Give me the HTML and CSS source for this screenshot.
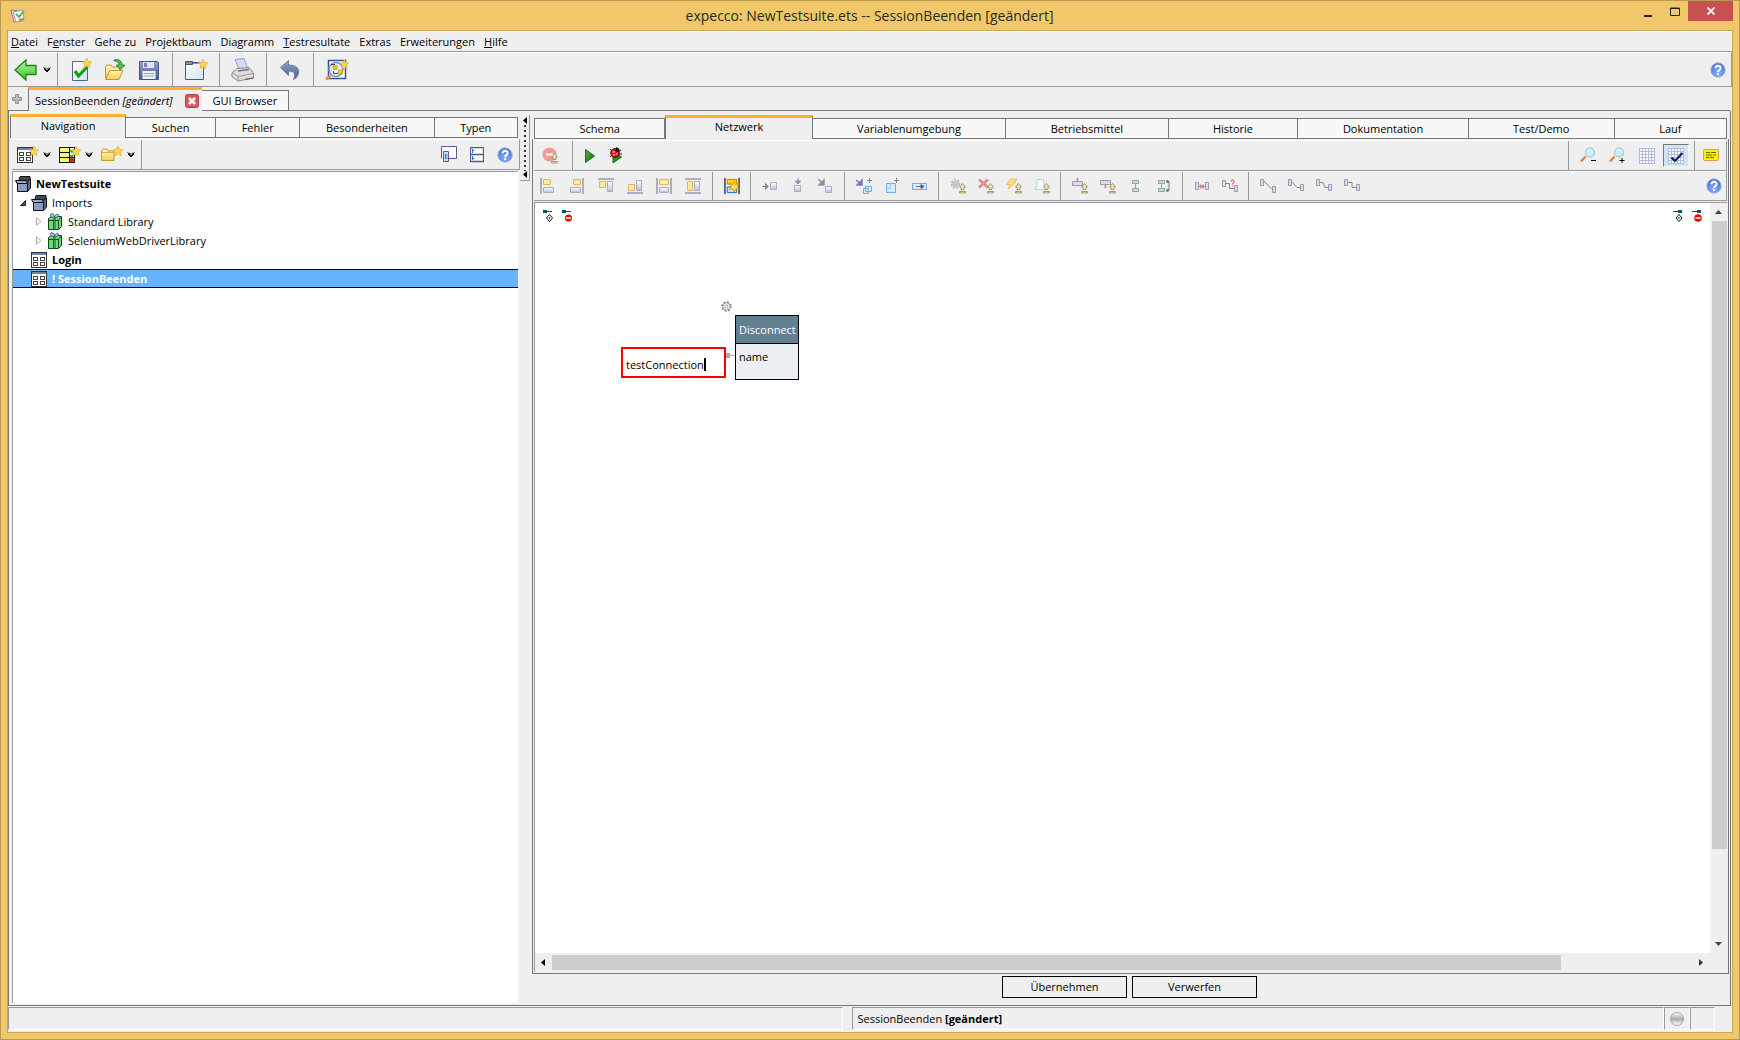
FILE: index.html
```html
<!DOCTYPE html>
<html lang="de">
<head>
<meta charset="utf-8">
<title>expecco: NewTestsuite.ets -- SessionBeenden [geändert]</title>
<link rel="stylesheet" href="styles.css">
</head>
<body>
<svg class="defs" aria-hidden="true">
  <defs>
    <linearGradient id="g-green" x1="0" y1="0" x2="0" y2="1"><stop offset="0" stop-color="#b6f7a0"/><stop offset="1" stop-color="#2fc41f"/></linearGradient>
    <linearGradient id="g-play" x1="0" y1="0" x2="1" y2="1"><stop offset="0" stop-color="#5db82c"/><stop offset="1" stop-color="#14661a"/></linearGradient>
    <linearGradient id="g-yellow" x1="0" y1="0" x2="0" y2="1"><stop offset="0" stop-color="#fff6b8"/><stop offset="1" stop-color="#f7cf55"/></linearGradient>
    <linearGradient id="g-page" x1="0" y1="0" x2="1" y2="1"><stop offset="0" stop-color="#fff"/><stop offset="1" stop-color="#d6e2f4"/></linearGradient>
    <linearGradient id="g-blue" x1="0" y1="0" x2="0" y2="1"><stop offset="0" stop-color="#93a1c6"/><stop offset="1" stop-color="#4c5f96"/></linearGradient>
    <linearGradient id="g-box" x1="0" y1="0" x2="0" y2="1"><stop offset="0" stop-color="#fff"/><stop offset="1" stop-color="#b9bdd8"/></linearGradient>
    <radialGradient id="g-help" cx=".5" cy=".7" r=".7"><stop offset="0" stop-color="#8db4ff"/><stop offset="1" stop-color="#3f6ad6"/></radialGradient>
    <linearGradient id="g-led" x1="0" y1="0" x2="0" y2="1"><stop offset="0" stop-color="#fff"/><stop offset=".5" stop-color="#aaa"/><stop offset="1" stop-color="#fff"/></linearGradient>
  </defs>
  <symbol id="star" viewBox="0 0 10 10"><path d="M5 0.3 6.4 3.4 9.7 3.8 7.4 6.2 8 9.6 5 8 2 9.6 2.6 6.2 .3 3.8 3.6 3.4Z" fill="#ffd84a" stroke="#e0a93a" stroke-width=".7"/></symbol>
  <symbol id="pm" viewBox="0 0 7 11"><path d="M3.500.5 6.500 4H5v2.500H2V4H.5ZM.5 8.500h6v1.500h-6Z" fill="#f7e6a0" stroke="#8f866c" stroke-width=".8"/></symbol>
  <symbol id="chev" viewBox="0 0 8 6"><path d="M.5.5 4 4 7.500.5M2 .5 4 2.500 6 .5M1 2 4 5 7 2" fill="none" stroke="#111"/></symbol>
  <symbol id="help" viewBox="0 0 16 16"><circle cx="8" cy="8" r="7.200" fill="url(#g-help)" stroke="#9fb4e4"/><path d="M5.500 6.200C5.500 3 10.600 3 10.600 6c0 2-2.500 1.900-2.500 4M8.100 11.300v1.700" fill="none" stroke="#fff" stroke-width="1.900"/></symbol>
  <symbol id="app" viewBox="0 0 16 16"><path d="M1 2 10 3 12 13 4 14Z" fill="#e9eef8" stroke="#b46a58"/><path d="M3 4 13 2 14 12 6 14Z" fill="#f4f7fb" stroke="#9aa6b8"/><path d="M6 6 9 9 14 3" fill="none" stroke="#5bb96c" stroke-width="2"/><path d="M9 12 14 11" stroke="#d8764e" stroke-width="2"/></symbol>
  <symbol id="back" viewBox="0 0 24 22"><path d="M1 11 12 1V6.500H22V15.500H12V21Z" fill="url(#g-green)" stroke="#22821d" stroke-width="1.300"/></symbol>
  <symbol id="newcheck" viewBox="0 0 22 24"><path d="M2.500 3.500h15v19h-15z" fill="url(#g-page)" stroke="#53648f"/><path d="M5 13 8.500 18 17 9" fill="none" stroke="#12a012" stroke-width="3.200"/><use href="#star" x="12" y="0" width="10" height="10"/></symbol>
  <symbol id="open" viewBox="0 0 22 24"><path d="M1.500 20.500V8.500l1.500-1.500h4l1.500 2h7v3.500" fill="url(#g-yellow)" stroke="#c8962a"/><path d="M1.500 21.500 6 12.500H19L15 21.500Z" fill="url(#g-yellow)" stroke="#c8962a"/><path d="M10 2C15 .5 18 3 18 7h3l-4.500 5L12 7h3C15 4 13 3 10 3Z" fill="#4fc04a" stroke="#217d26" stroke-width=".8"/></symbol>
  <symbol id="save" viewBox="0 0 20 20"><path d="M.5 1.500h18l1 1v17H.5Z" fill="url(#g-blue)" stroke="#46568b"/><path d="M4 2h11v6H4z" fill="#dfe5f1"/><path d="M5 3h3v4H5z" fill="#7382b0"/><path d="M3.500 11h13v8h-13z" fill="#eef1f8"/><path d="M5 13.500h10M5 16h10" stroke="#9aa3bf"/></symbol>
  <symbol id="newwin" viewBox="0 0 24 22"><path d="M1.500 3.500h18v17h-18z" fill="url(#g-page)" stroke="#46568b"/><path d="M1.500 2.500h7v3h-7z" fill="#8391ba" stroke="#46568b"/><path d="M9 4.500h10" stroke="#8391ba"/><use href="#star" x="14" y="0" width="10" height="10"/></symbol>
  <symbol id="print" viewBox="0 0 24 24"><path d="M4 1.500 13 .5 17 11H8Z" fill="#cfdef6" stroke="#8ca0c8"/><path d="M1 15 6 10.500 18 9.500 22.500 15V20L7 23 1 19Z" fill="#dcdcdc" stroke="#8c8c8c"/><path d="M1.500 15 7 18.500 22 15.500M7 18.500V23" fill="none" stroke="#999"/><path d="M7 13 18 11.500" stroke="#777" stroke-width="1.500"/><path d="M14 21.500 22 20" stroke="#555"/></symbol>
  <symbol id="undo" viewBox="0 0 20 20"><path d="M.5 7.500 8.500.5V5C16 5 19.500 8 18.500 13 18 16 16 18.500 13.500 19.500 16 15 15 11 8.500 11v4.500Z" fill="url(#g-blue)" stroke="#5f6d96" stroke-width=".8"/></symbol>
  <symbol id="search" viewBox="0 0 24 22"><path d="M3.500 1.500h17v18h-17z" fill="#fff" stroke="#3c4f96" stroke-width="1.500"/><circle cx="11" cy="10.500" r="7" fill="#d9f0fa" stroke="#7c96bb" stroke-width="1.500"/><path d="M8.500 12v2.500h5M6 5.500h4" fill="none" stroke="#222" stroke-width=".8"/><path d="M8 6.500h4v4H8zM13.500 11h4v4h-4z" fill="#f8c000" stroke="#cf9a00" stroke-width=".6"/><path d="M5.500 16.500 1 20.500" stroke="#e58b42" stroke-width="3"/><use href="#star" x="15" y="0" width="9" height="10"/></symbol>
  <symbol id="plus" viewBox="0 0 10 10"><path d="M3.500.5h3v3h3v3h-3v3h-3v-3h-3v-3h3Z" fill="#bbb" stroke="#909090"/></symbol>
  <symbol id="closetab" viewBox="0 0 14 14"><rect x=".5" y=".5" width="13" height="13" rx="2" fill="#e0565c" stroke="#b4404a"/><path d="M4 4 10 10M10 4 4 10" stroke="#fff" stroke-width="2.600"/></symbol>
  <symbol id="block" viewBox="0 0 16 16"><g shape-rendering="crispEdges"><path d="M.5.5h15v15H.5z" fill="#fff" stroke="#333"/><path d="M1 1h14v2H1z" fill="#6e81ad"/><path d="M2.500 5.500h4v3h-4zM9.500 5.500h4v3h-4zM2.500 10.500h4v3h-4zM9.500 10.500h4v3h-4z" fill="#fff" stroke="#444"/></g></symbol>
  <symbol id="newblock" viewBox="0 0 22 17"><use href="#block" x="0" y="1" width="16" height="16"/><use href="#star" x="12" y="0" width="10" height="10"/></symbol>
  <symbol id="newlist" viewBox="0 0 22 17"><g shape-rendering="crispEdges"><path d="M.5 1.500h15v15H.5z" fill="#fff27c" stroke="#111"/><path d="M0 6.500h16M0 11.500h16M10.500 1v16" stroke="#111"/><path d="M11 2h4v9h-4z" fill="#fff"/></g><path d="M11 4l2 2 2-3M11 9l2 2 2-3" fill="none" stroke="#20a030" stroke-width="1.500"/><path d="M11.500 12.500l3 3m0-3-3 3" stroke="#e00000" stroke-width="2"/><use href="#star" x="12" y="0" width="10" height="10"/></symbol>
  <symbol id="newfolder" viewBox="0 0 22 17"><path d="M.5 14.500V4.500l1.500-1.500h4l1 2h6v9.500Z" fill="url(#g-yellow)" stroke="#c8962a"/><path d="M1 6.500H13" stroke="#d8ae45"/><use href="#star" x="12" y="0" width="10" height="10"/></symbol>
  <symbol id="floatwin" viewBox="0 0 16 17"><path d="M.5 12.500V.5h15v12H8" fill="#fff" stroke="#555a86"/><path d="M2.500 5.500h5v10h-5z" fill="#c7def5" stroke="#555a86"/><path d="M4.500 8v5M5 9h1.500M5 12h1.500" stroke="#2779c4"/></symbol>
  <symbol id="splitwin" viewBox="0 0 14 16"><path d="M.5.5h13v14H.5zM.5 7.500h13" fill="#fff" stroke="#555a86" stroke-width="1.300"/><path d="M2.500 2v4M2.500 3.500h2M2.500 9v4M2.500 11.500h2" stroke="#2779c4"/></symbol>
  <symbol id="suite" viewBox="0 0 16 16"><path d="M5 .5h10v3l-3 2H3.500Z" fill="#3d4a4d" stroke="#111"/><path d="M12.500 5.500 15.500 3V12l-3 3.500Z" fill="#5d6a8e" stroke="#111"/><path d="M2.500 7.500h10v8h-10z" fill="#8c9cc4" stroke="#111"/><path d="M.5 4.500h11l1 3H2Z" fill="#94a3cc" stroke="#111"/></symbol>
  <symbol id="gift" viewBox="0 0 15 17"><path d="M1 5.500 4 3.500h10v10l-3 3H1Z" fill="#69dc72" stroke="#10441b"/><path d="M1.500 7.500h9.500v8.500M11 7.500 14 4" fill="none" stroke="#10441b"/><path d="M6 5.500v11M7.500 5v11" stroke="#2d5070"/><path d="M7 4.500C2 4.500 2 .8 4.500.8 7 .8 7 4.500 7 4.500 7 .8 12 .5 11 3 10.500 4.500 7 4.500 7 4.500Z" fill="#bcd2e4" stroke="#2d5070"/></symbol>
  <symbol id="opened" viewBox="0 0 6 6"><path d="M5.500.5v5H.5Z" fill="#555" stroke="#222"/></symbol>
  <symbol id="closed" viewBox="0 0 6 9"><path d="M.5.8v7.400L5 4.500Z" fill="#fff" stroke="#aaa"/></symbol>
  <symbol id="nobreak" viewBox="0 0 18 18"><circle cx="7.500" cy="7.500" r="7" fill="#f09a9a"/><path d="M4 7.500h7" stroke="#fff" stroke-width="2.200"/><use href="#pm" x="9" y="6" width="7" height="11"/></symbol>
  <symbol id="play" viewBox="0 0 10 14"><path d="M.5.5 9.500 7 .5 13.500Z" fill="url(#g-play)" stroke="#176b1c"/></symbol>
  <symbol id="debug" viewBox="0 0 14 17"><path d="M4 4.500 12.500 10 4 16Z" fill="url(#g-play)" stroke="#176b1c"/><path d="M1 2 3 4M8 0 7 3M12 3 9 5M13 7H9M1 10 3 8" stroke="#111"/><ellipse cx="6" cy="6" rx="4.300" ry="4.500" fill="#e31616" stroke="#300" stroke-width=".8"/><path d="M3.500 5h2M6.500 7h2M4 8h1.500" stroke="#fff"/><circle cx="8.500" cy="3" r="2" fill="#111"/></symbol>
  <symbol id="mag" viewBox="0 0 16 16"><path d="M5.500 9.500 1 14.500" stroke="#d98a4a" stroke-width="2.600"/><circle cx="10" cy="5.500" r="4.600" fill="#c5effb" stroke="#a9b9cb"/><path d="M8 4Q9.500 2 11.500 3" stroke="#fff" fill="none"/></symbol>
  <symbol id="zoomout" viewBox="0 0 18 17"><use href="#mag" width="16" height="16"/><path d="M11 13.500h5" stroke="#111"/></symbol>
  <symbol id="zoomin" viewBox="0 0 18 17"><use href="#mag" width="16" height="16"/><path d="M10.500 13.500h5M13 11v5" stroke="#111"/></symbol>
  <symbol id="grid" viewBox="0 0 16 16"><path d="M.5.5h15v15H.5zM3.500 0v16M6.500 0v16M9.500 0v16M12.500 0v16M0 3.500h16M0 6.500h16M0 9.500h16M0 12.500h16" fill="#fff" stroke="#b3bbdc" shape-rendering="crispEdges"/></symbol>
  <symbol id="gridcheck" viewBox="0 0 16 16"><use href="#grid" width="16" height="16"/><path d="M3.500 9.500 7 13 14.500 5" fill="none" stroke="#0d1f74" stroke-width="2.200"/></symbol>
  <symbol id="note" viewBox="0 0 16 13"><rect x=".5" y=".5" width="15" height="11" rx="1" fill="#fff200" stroke="#d89a60"/><path d="M3 3.500h4M8 3.500h5M3 6h6M10 6h3M3 8.500h3M7 8.500h4" stroke="#665c00"/></symbol>
  <symbol id="al-left" viewBox="0 0 16 16"><path d="M1 0v16" stroke="#9a96b4" stroke-width="1.500"/><path d="M3.500 1.500h7v5h-7z" fill="#ffeb94" stroke="#dfb274"/><path d="M3.500 9.500h10v5h-10z" fill="url(#g-box)" stroke="#a9adc8"/></symbol>
  <symbol id="al-right" viewBox="0 0 16 16"><path d="M14 0v16" stroke="#9a96b4" stroke-width="1.500"/><path d="M4.500 1.500h7v5h-7z" fill="#ffeb94" stroke="#dfb274"/><path d="M1.500 9.500h10v5h-10z" fill="url(#g-box)" stroke="#a9adc8"/></symbol>
  <symbol id="al-top" viewBox="0 0 16 16"><path d="M0 1h16" stroke="#9a96b4" stroke-width="1.500"/><path d="M1.500 3.500h6v6h-6z" fill="#ffeb94" stroke="#dfb274"/><path d="M9.500 3.500h5v10h-5z" fill="url(#g-box)" stroke="#a9adc8"/></symbol>
  <symbol id="al-bottom" viewBox="0 0 16 16"><path d="M0 15h16" stroke="#9a96b4" stroke-width="1.500"/><path d="M1.500 6.500h6v6h-6z" fill="#ffeb94" stroke="#dfb274"/><path d="M9.500 2.500h5v10h-5z" fill="url(#g-box)" stroke="#a9adc8"/></symbol>
  <symbol id="al-vcol" viewBox="0 0 16 16"><path d="M1 0v16M15 0v16" stroke="#9a96b4" stroke-width="1.500"/><path d="M3.500 1.500h9v5h-9z" fill="#ffeb94" stroke="#dfb274"/><path d="M3.500 9.500h9v5h-9z" fill="url(#g-box)" stroke="#a9adc8"/></symbol>
  <symbol id="al-hrow" viewBox="0 0 16 16"><path d="M0 1h16M0 15h16" stroke="#9a96b4" stroke-width="1.500"/><path d="M2.500 3.500h5v9h-5z" fill="#ffeb94" stroke="#dfb274"/><path d="M9.500 3.500h5v9h-5z" fill="url(#g-box)" stroke="#a9adc8"/></symbol>
  <symbol id="layout" viewBox="0 0 17 17"><path d="M1 0v17M16 0v17" stroke="#33304a" stroke-width="1.500"/><path d="M3.500 1.500h10v5h-10z" fill="#ffd900" stroke="#c77a00"/><path d="M3.500 9.500h10v6h-10z" fill="#bfe0ff" stroke="#0d6bd0"/><path d="M11 3 12 7 16 6 13.500 9 16 12 12 11.500 11 15 9.500 11.500 6 12 8 9 6 6 9.500 7Z" fill="#ffe84a" stroke="#e08a00" stroke-width=".8"/></symbol>
  <symbol id="mv-right" viewBox="0 0 16 16"><path d="M0 8.500h6M3.500 5.500v6l3-3Z" fill="#8d8da8" stroke="#8d8da8"/><path d="M8.500 4.500h6v7h-6z" fill="url(#g-box)" stroke="#a9adc8"/></symbol>
  <symbol id="mv-down" viewBox="0 0 16 16"><path d="M8 0v5M5.500 3h5L8 6Z" fill="#8d8da8" stroke="#8d8da8"/><path d="M4.500 7.500h6v6h-6z" fill="url(#g-box)" stroke="#a9adc8"/></symbol>
  <symbol id="mv-diag" viewBox="0 0 16 16"><path d="M0 1 5 6M6 2v5H1Z" fill="#8d8da8" stroke="#8d8da8" stroke-width="1.500"/><path d="M7.500 8.500h6v6h-6z" fill="url(#g-box)" stroke="#a9adc8"/></symbol>
  <symbol id="add-diag" viewBox="0 0 16 16"><path d="M0 2 5 6M6 2v5H1Z" fill="#7d78bd" stroke="#7d78bd" stroke-width="1.500"/><path d="M9.500 8.500h6v5h-6zM7.500 10.500h5v5h-5z" fill="#d8ecff" stroke="#72ace0"/><path d="M13.500 0v5M11 2.500h5" stroke="#888"/></symbol>
  <symbol id="add-box" viewBox="0 0 16 16"><path d="M2.500 5.500h9v9h-9z" fill="#d4ebff" stroke="#72ace0"/><path d="M2.500 10.500h4V5.500" fill="none" stroke="#9cc6ec"/><path d="M12.500 0v5M10 2.500h5" stroke="#888"/></symbol>
  <symbol id="flow" viewBox="0 0 16 16"><path d="M.5 5.500h14v6H.5z" fill="#d4ebff" stroke="#72ace0"/><path d="M4 8.500h6M9 6.500v4l3-2Z" fill="#555" stroke="#555" stroke-width=".8"/></symbol>
  <symbol id="gearpm" viewBox="0 0 16 16"><circle cx="5.500" cy="6" r="3.600" fill="#e4e4e4" stroke="#bdbdbd" stroke-width="2.400" stroke-dasharray="2 1"/><circle cx="5.500" cy="6" r="1.500" fill="#eee" stroke="#aaa"/><use href="#pm" x="9" y="5" width="7" height="11"/></symbol>
  <symbol id="xpm" viewBox="0 0 16 16"><path d="M1 1.500 10 9.500M10 1.500 1 9.500" stroke="#dc9191" stroke-width="3"/><use href="#pm" x="9" y="5" width="7" height="11"/></symbol>
  <symbol id="boltpm" viewBox="0 0 16 16"><path d="M4 1h7L8 4h2L2 11 4 6.500H1Z" fill="#ffe070" stroke="#dcb964" stroke-width=".8"/><use href="#pm" x="9" y="5" width="7" height="11"/></symbol>
  <symbol id="bellpm" viewBox="0 0 16 16"><path d="M3.500 1.500h6l1 8h2v2h-11v-2h1Z" fill="#f6fbff" stroke="#b7cfe6"/><use href="#pm" x="9" y="5" width="7" height="11"/></symbol>
  <symbol id="inpm" viewBox="0 0 16 16"><path d="M5.500 0v3" stroke="#d87878" stroke-width="1.600"/><path d="M.5 3.500h10v4H.5z" fill="#dadcec" stroke="#9a9ab4"/><use href="#pm" x="9" y="5" width="7" height="11"/></symbol>
  <symbol id="outpm" viewBox="0 0 16 16"><path d="M5.500 7v3" stroke="#d87878" stroke-width="1.600"/><path d="M.5 2.500h10v4H.5z" fill="#dadcec" stroke="#9a9ab4"/><use href="#pm" x="9" y="5" width="7" height="11"/></symbol>
  <symbol id="link-v" viewBox="0 0 16 16"><path d="M7.500 5v6" stroke="#e08585"/><path d="M4.500 2.500h6v3h-6zM4.500 10.500h6v3h-6z" fill="#c4dcdc" stroke="#8fa6a8"/></symbol>
  <symbol id="link-turn" viewBox="0 0 16 16"><path d="M5.500 5v6" stroke="#e08585"/><path d="M2.500 2.500h6v3h-6zM2.500 10.500h6v3h-6z" fill="#c4dcdc" stroke="#8fa6a8"/><path d="M10 3.500h3v9h-3M12 2v3L10 3.500ZM12 11v3l-2-1.500Z" fill="none" stroke="#777"/></symbol>
  <symbol id="cut" viewBox="0 0 16 16"><path d="M1.500 4.500h3v7h-3zM11.500 4.500h3v7h-3z" fill="#dadcec" stroke="#9a9ab4"/><path d="M5 8.500h6" stroke="#888"/><path d="M6 6.500l4 4m0-4-4 4" stroke="#e08080" stroke-width="1.300"/></symbol>
  <symbol id="ask" viewBox="0 0 16 16"><path d="M.5 2.500h3v6h-3zM12.500 7.500h3v6h-3z" fill="#dadcec" stroke="#9a9ab4"/><path d="M4 5.500h3.500v5H12" fill="none" stroke="#888"/><path d="M9 3.500C9 1.500 12 1.500 12 3.500 12 5 10.500 5 10.500 6.500M10.500 7.500v1" fill="none" stroke="#e08080" stroke-width="1.300"/></symbol>
  <symbol id="ln-diag" viewBox="0 0 16 16"><path d="M.5 1.500h3v6h-3zM12.500 8.500h3v6h-3z" fill="#dadcec" stroke="#9a9ab4"/><path d="M4 3 12 11.500" stroke="#888"/></symbol>
  <symbol id="ln-half" viewBox="0 0 16 16"><path d="M.5 1.500h3v6h-3zM12.500 6.500h3v6h-3z" fill="#dadcec" stroke="#9a9ab4"/><path d="M4 4 9 9.500h3" fill="none" stroke="#888"/></symbol>
  <symbol id="ln-curve" viewBox="0 0 16 16"><path d="M.5 1.500h3v6h-3zM12.500 6.500h3v6h-3z" fill="#dadcec" stroke="#9a9ab4"/><path d="M4 4.500h2Q8 4.500 8 7T10 9.500h2" fill="none" stroke="#888"/></symbol>
  <symbol id="ln-step" viewBox="0 0 16 16"><path d="M.5 1.500h3v6h-3zM12.500 6.500h3v6h-3z" fill="#dadcec" stroke="#9a9ab4"/><path d="M4 4.500h4v5h4" fill="none" stroke="#888"/></symbol>
  <symbol id="pin-add" viewBox="0 0 11 12"><path d="M1 0h4v3H1z" fill="#00595c"/><path d="M5 1.500h5" stroke="#00595c"/><path d="M7.500 4.500 10.500 8 7.500 11.500 4.500 8Z" fill="#fff" stroke="#111"/><path d="M7.500 7v2M6.500 8h2" stroke="#111" stroke-width=".6"/></symbol>
  <symbol id="pin-del" viewBox="0 0 11 12"><path d="M1 0h4v3H1z" fill="#00595c"/><path d="M5 1.500h5" stroke="#00595c"/><circle cx="7.500" cy="8" r="3.500" fill="#f00"/><path d="M5 8h5" stroke="#fff" stroke-width="1.500"/></symbol>
  <symbol id="pinr-add" viewBox="0 0 11 12"><path d="M6 0h4v3H6z" fill="#00595c"/><path d="M1 1.500h5" stroke="#00595c"/><path d="M7 4.500 10 8 7 11.500 4 8Z" fill="#fff" stroke="#111"/><path d="M7 7v2M6 8h2" stroke="#111" stroke-width=".6"/></symbol>
  <symbol id="pinr-del" viewBox="0 0 11 12"><path d="M6 0h4v3H6z" fill="#00595c"/><path d="M1 1.500h5" stroke="#00595c"/><circle cx="7" cy="8" r="3.800" fill="#f00"/><path d="M4.500 8h5" stroke="#fff" stroke-width="1.500"/></symbol>
  <symbol id="gear" viewBox="0 0 11 11"><circle cx="5.500" cy="5.500" r="4.500" fill="none" stroke="#777" stroke-width="1.400" stroke-dasharray="1.800 1.734"/><circle cx="5.500" cy="5.500" r="3.700" fill="#f4f4f4" stroke="#888" stroke-width=".8"/><circle cx="5.500" cy="5.500" r="1.500" fill="#fff" stroke="#888" stroke-width=".8"/></symbol>
  <symbol id="a-left" viewBox="0 0 4 7"><path d="M4 0v7L0 3.500Z" fill="#000"/></symbol>
  <symbol id="a-up" viewBox="0 0 7 4"><path d="M0 4h7L3.500 0Z" fill="#444"/></symbol>
  <symbol id="a-down" viewBox="0 0 7 4"><path d="M0 0h7L3.500 4Z" fill="#444"/></symbol>
  <symbol id="a-right" viewBox="0 0 4 7"><path d="M0 0v7L4 3.500Z" fill="#333"/></symbol>
  <symbol id="led" viewBox="0 0 14 14"><circle cx="7" cy="7" r="6.500" fill="url(#g-led)" stroke="#a8a8a8"/></symbol>
</svg>

<div class="window">
  <header class="titlebar">
    <svg class="appicon" width="16" height="16"><use href="#app"/></svg>
    <h1>expecco: NewTestsuite.ets -- SessionBeenden [geändert]</h1>
    <div class="winbtns">
      <button class="min" aria-label="Minimieren"><svg width="8" height="14"><path d="M0 12h8" stroke="#222" stroke-width="2"/></svg></button>
      <button class="max" aria-label="Maximieren"><svg width="10" height="9"><path d="M.5 1h9v7.500h-9zM0 1.500h10" fill="none" stroke="#222"/></svg></button>
      <button class="close" aria-label="Schließen"><svg width="8" height="8"><path d="M.5.5l7 7m0-7-7 7" stroke="#fff" stroke-width="1.800"/></svg></button>
    </div>
  </header>

  <div class="client">
    <nav class="menubar">
      <a href="#"><u>D</u>atei</a><a href="#">F<u>e</u>nster</a><a href="#">Gehe zu</a><a href="#">Projektbaum</a><a href="#">Diagramm</a><a href="#"><u>T</u>estresultate</a><a href="#">Extras</a><a href="#">Erweiterungen</a><a href="#"><u>H</u>ilfe</a>
    </nav>

    <div class="toolbar main-tools">
      <div class="group"><button class="back" aria-label="Zurück"><svg width="24" height="22"><use href="#back"/></svg><svg width="8" height="6"><use href="#chev"/></svg></button></div>
      <div class="group"><button aria-label="Neu"><svg width="22" height="24"><use href="#newcheck"/></svg></button><button aria-label="Öffnen"><svg width="22" height="24"><use href="#open"/></svg></button><button aria-label="Speichern"><svg width="20" height="20"><use href="#save"/></svg></button></div>
      <div class="group"><button aria-label="Neues Fenster"><svg width="24" height="22"><use href="#newwin"/></svg></button></div>
      <div class="group"><button aria-label="Drucken"><svg width="24" height="24"><use href="#print"/></svg></button></div>
      <div class="group"><button aria-label="Rückgängig"><svg width="20" height="20"><use href="#undo"/></svg></button></div>
      <div class="group last"><button aria-label="Suchen"><svg width="24" height="22"><use href="#search"/></svg></button></div>
      <button class="help" aria-label="Hilfe"><svg width="16" height="16"><use href="#help"/></svg></button>
    </div>

    <div class="doctabs">
      <button class="addtab" aria-label="Neuer Tab"><svg width="10" height="10"><use href="#plus"/></svg></button>
      <div class="doctab active"><button>SessionBeenden&nbsp;<i>[geändert]</i></button><button class="closetab" aria-label="Tab schließen"><svg width="14" height="14"><use href="#closetab"/></svg></button></div>
      <button class="doctab">GUI Browser</button>
      <div class="rest"></div>
    </div>

    <main class="workspace">
      <section class="left">
        <div class="tabs">
          <button class="tab active">Navigation</button><button class="tab">Suchen</button><button class="tab">Fehler</button><button class="tab">Besonderheiten</button><button class="tab">Typen</button>
        </div>
        <div class="toolbar nav-tools">
          <div class="group">
            <button aria-label="Neuer Baustein"><svg width="22" height="17"><use href="#newblock"/></svg><svg width="8" height="6"><use href="#chev"/></svg></button>
            <button aria-label="Neuer Testplan"><svg width="22" height="17"><use href="#newlist"/></svg><svg width="8" height="6"><use href="#chev"/></svg></button>
            <button aria-label="Neuer Ordner"><svg width="22" height="17"><use href="#newfolder"/></svg><svg width="8" height="6"><use href="#chev"/></svg></button>
          </div>
          <div class="group end">
            <button aria-label="Ansicht"><svg width="16" height="17"><use href="#floatwin"/></svg></button>
            <button aria-label="Teilen"><svg width="14" height="16"><use href="#splitwin"/></svg></button>
            <button aria-label="Hilfe"><svg width="16" height="16"><use href="#help"/></svg></button>
          </div>
        </div>
        <ul class="tree">
          <li class="root"><svg width="16" height="16"><use href="#suite"/></svg><b>NewTestsuite</b></li>
          <li class="l1"><span class="exp"><svg width="6" height="6"><use href="#opened"/></svg></span><svg width="16" height="16"><use href="#suite"/></svg><span>Imports</span></li>
          <li class="l2"><span class="exp"><svg width="6" height="9"><use href="#closed"/></svg></span><svg width="16" height="17"><use href="#gift"/></svg><span>Standard Library</span></li>
          <li class="l2"><span class="exp"><svg width="6" height="9"><use href="#closed"/></svg></span><svg width="16" height="17"><use href="#gift"/></svg><span>SeleniumWebDriverLibrary</span></li>
          <li class="l1"><span class="exp"></span><svg width="16" height="16"><use href="#block"/></svg><b>Login</b></li>
          <li class="l1 selected"><span class="exp"></span><svg width="16" height="16"><use href="#block"/></svg><b>! SessionBeenden</b></li>
        </ul>
      </section>

      <div class="splitter"><div class="grip"><svg width="4" height="7"><use href="#a-left"/></svg><span class="dots"></span><svg width="4" height="7"><use href="#a-left"/></svg></div></div>

      <section class="right">
        <div class="tabs">
          <button class="tab">Schema</button><button class="tab active">Netzwerk</button><button class="tab">Variablenumgebung</button><button class="tab">Betriebsmittel</button><button class="tab">Historie</button><button class="tab">Dokumentation</button><button class="tab">Test/Demo</button><button class="tab">Lauf</button>
        </div>
        <div class="editor">
          <div class="toolbar run-tools">
            <div class="group"><button aria-label="Haltepunkt"><svg width="18" height="18"><use href="#nobreak"/></svg></button></div>
            <div class="group last"><button aria-label="Start"><svg width="10" height="14"><use href="#play"/></svg></button><button aria-label="Debug"><svg width="14" height="17"><use href="#debug"/></svg></button></div>
            <div class="group zoom"><button aria-label="Verkleinern"><svg width="18" height="17"><use href="#zoomout"/></svg></button><button aria-label="Vergrößern"><svg width="18" height="17"><use href="#zoomin"/></svg></button><button aria-label="Raster"><svg width="16" height="16"><use href="#grid"/></svg></button><button class="pressed" aria-label="Am Raster ausrichten"><svg width="16" height="16"><use href="#gridcheck"/></svg></button></div>
            <div class="group last notes"><button aria-label="Notiz"><svg width="16" height="13"><use href="#note"/></svg></button></div>
          </div>
          <div class="toolbar edit-tools">
            <div class="group first"><button aria-label="Links"><svg><use href="#al-left"/></svg></button><button aria-label="Rechts"><svg><use href="#al-right"/></svg></button><button aria-label="Oben"><svg><use href="#al-top"/></svg></button><button aria-label="Unten"><svg><use href="#al-bottom"/></svg></button><button aria-label="Vertikal"><svg><use href="#al-vcol"/></svg></button><button aria-label="Horizontal"><svg><use href="#al-hrow"/></svg></button></div>
            <div class="group"><button aria-label="Layout"><svg><use href="#layout"/></svg></button></div>
            <div class="group"><button aria-label="Nach rechts"><svg><use href="#mv-right"/></svg></button><button aria-label="Nach unten"><svg><use href="#mv-down"/></svg></button><button aria-label="Diagonal"><svg><use href="#mv-diag"/></svg></button></div>
            <div class="group"><button aria-label="Schritt einfügen"><svg><use href="#add-diag"/></svg></button><button aria-label="Neuer Schritt"><svg><use href="#add-box"/></svg></button><button aria-label="Ablauf"><svg><use href="#flow"/></svg></button></div>
            <div class="group"><button aria-label="Aktivität"><svg><use href="#gearpm"/></svg></button><button aria-label="Abbruch"><svg><use href="#xpm"/></svg></button><button aria-label="Ausnahme"><svg><use href="#boltpm"/></svg></button><button aria-label="Signal"><svg><use href="#bellpm"/></svg></button></div>
            <div class="group"><button aria-label="Eingang"><svg><use href="#inpm"/></svg></button><button aria-label="Ausgang"><svg><use href="#outpm"/></svg></button><button aria-label="Verbinden"><svg><use href="#link-v"/></svg></button><button aria-label="Umkehren"><svg><use href="#link-turn"/></svg></button></div>
            <div class="group"><button aria-label="Trennen"><svg><use href="#cut"/></svg></button><button aria-label="Prüfen"><svg><use href="#ask"/></svg></button></div>
            <div class="group last"><button aria-label="Direkt"><svg><use href="#ln-diag"/></svg></button><button aria-label="Geknickt"><svg><use href="#ln-half"/></svg></button><button aria-label="Rund"><svg><use href="#ln-curve"/></svg></button><button aria-label="Rechtwinklig"><svg><use href="#ln-step"/></svg></button></div>
            <button class="help" aria-label="Hilfe"><svg><use href="#help"/></svg></button>
          </div>
          <div class="scroller">
            <div class="canvas">
              <div class="pins"><svg width="11" height="12"><use href="#pin-add"/></svg><svg width="11" height="12"><use href="#pin-del"/></svg></div>
              <div class="pins"><svg width="11" height="12"><use href="#pinr-add"/></svg><svg width="11" height="12"><use href="#pinr-del"/></svg></div>
              <svg class="gear" width="11" height="11"><use href="#gear"/></svg>
              <div class="node"><div class="node-head">Disconnect</div><label class="node-pin" for="pin-name">name</label></div>
              <div class="wire"></div>
              <div class="pinedit"><input id="pin-name" type="text" value="testConnection"><span class="caret"></span></div>
            </div>
            <div class="vbar"><svg width="7" height="4"><use href="#a-up"/></svg><div class="track"><div class="thumb"></div></div><svg width="7" height="4"><use href="#a-down"/></svg></div>
            <div class="hbar"><svg width="4" height="7"><use href="#a-left"/></svg><div class="track"><div class="thumb"></div></div><svg width="4" height="7"><use href="#a-right"/></svg></div>
          </div>
        </div>
        <div class="actions"><button>Übernehmen</button><button>Verwerfen</button></div>
      </section>
    </main>

    <footer class="status">
      <div class="field message"></div>
      <div class="field current">SessionBeenden&nbsp;<b>[geändert]</b></div>
      <div class="field lamp"><svg width="14" height="14"><use href="#led"/></svg></div>
      <div class="field spare"></div>
    </footer>
  </div>
</div>
</body>
</html>
```
FILE: styles.css
```css
* { box-sizing: border-box; }
body { margin: 0; font: 11px/14px "Open Sans", "Noto Sans", sans-serif; color: #000; }
button { font: inherit; color: inherit; background: none; border: 0; padding: 0; margin: 0; display: flex; align-items: center; justify-content: center; white-space: nowrap; }
svg { display: block; flex: none; }
.defs { position: absolute; width: 0; height: 0; }

.window { height: 100vh; display: flex; flex-direction: column; background: #f0c869; border: 1px solid #b8994f; padding: 0 6px 6px; }

.titlebar { display: flex; align-items: center; height: 29px; flex: none; position: relative; }
.titlebar h1 { flex: 1; margin: 0; padding-right: 20px; font-size: 14px; line-height: 20px; font-weight: 400; text-align: center; color: #2a2a1c; }
.appicon { margin-left: 3px; }
.winbtns { position: absolute; right: 0; top: 0; display: flex; height: 20px; }
.winbtns button { width: 27px; }
.winbtns .close { width: 45px; background: #c75050; }

.client { flex: 1; min-height: 0; display: flex; flex-direction: column; background: #efefef; border: 1px solid #c9a656; }

.menubar { height: 21px; flex: none; display: flex; align-items: center; gap: 9px; padding-left: 3px; border-top: 1px solid #fff; border-bottom: 1px solid #999; }
.menubar a { color: inherit; text-decoration: none; }

.toolbar { display: flex; flex: none; border-top: 1px solid #fff; border-bottom: 1px solid #999; border-right: 1px solid #999; }
.group { display: flex; align-items: center; border-right: 1px solid #999; }
.group.last { border-right: 0; }
.help { margin-left: auto; }

.main-tools { height: 35px; }
.main-tools .group { padding: 0 6px; }
.main-tools .group button { width: 34px; height: 32px; }
.main-tools .group .back { width: 37px; gap: 5px; }
.main-tools .help { width: 27px; }

.doctabs { height: 24px; flex: none; display: flex; align-items: flex-end; padding: 0 2px 0 0; }
.addtab { width: 20px; height: 24px; padding-right: 2px; border-bottom: 1px solid #777; }
.doctab { height: 21px; padding: 0 11px; background: #f8f8f8; border: 1px solid #777; border-left: 0; }
.doctab.active { display: flex; align-items: center; gap: 12px; height: 24px; padding: 0 3px 0 6px; background: #efefef; border: 0; border-top: 3px solid #ffb02e; border-left: 1px solid #777; }
.rest { flex: 1; align-self: stretch; border-bottom: 1px solid #777; }

.workspace { flex: 1; min-height: 0; display: grid; grid-template-columns: 510px 12px 1fr; margin-right: 1px; padding: 2px 1px 2px; border: 1px solid #777; border-top: 0; }
.left, .right { display: flex; flex-direction: column; min-width: 0; min-height: 0; }
.left { padding-top: 1px; }
.right { padding-top: 2px; }

.tabs { display: flex; align-items: flex-end; flex: none; height: 24px; }
.tab { flex: 1 1 auto; height: 21px; background: #f8f8f8; border: 1px solid #777; border-left-width: 0; }
.tab:first-child { border-left-width: 1px; }
.tab.active { height: 24px; padding: 0 4px 4px; background: #efefef; border: 0; border-top: 3px solid #ffb02e; border-left: 1px solid #777; border-right: 1px solid #777; }

.left .tabs { margin-right: 2px; }
.nav-tools { height: 31px; margin: 1px 0 0 2px; }
.nav-tools .group { padding: 0 6px 0 5px; gap: 8px; }
.nav-tools .group button { gap: 4px; }
.nav-tools .end { margin-left: auto; border: 0; padding: 0 6px 0 5px; gap: 13px; }

.tree { list-style: none; flex: 1; margin: 1px 2px 0 2px; padding: 2px 0; background: #fff; border-top: 1px solid #999; border-left: 1px solid #999; }
.tree li { display: flex; align-items: center; gap: 5px; height: 19px; padding-left: 2px; }
.tree .l1 { padding-left: 6px; }
.tree .l2 { padding-left: 22px; }
.exp { width: 7px; display: flex; justify-content: flex-end; }
.tree b { font-weight: 700; }
.tree .selected { background: #66b3ff; color: #fff; border-top: 1px solid #000; border-bottom: 1px solid #000; }

.grip { height: 66px; margin: 2px 2px 0 0; padding: 2px 0; display: flex; flex-direction: column; align-items: center; justify-content: space-between; border-right: 1px solid #999; border-bottom: 1px solid #999; }
.dots { width: 2px; height: 46px; background: repeating-linear-gradient(#333 0 2px, transparent 2px 5px); }

.right .tabs { margin: 0 2px 0 2px; }
.editor { flex: 1; min-height: 0; display: flex; flex-direction: column; border: 1px solid #777; border-top: 0; padding: 1px 1px 1px; }
.run-tools { height: 31px; }
.run-tools .group { padding: 0 8px 0 4px; }
.run-tools .group button { width: 26px; height: 23px; }
.run-tools .group.zoom { margin-left: auto; border-left: 1px solid #999; padding: 0 5px 0 7px; gap: 3px; }
.run-tools .group.notes { padding: 0 2px 0 3px; }
.run-tools .pressed { background: #cfe4fa; border: 1px solid #f6f6f6; border-top-color: #777; border-left-color: #777; }
.edit-tools { height: 30px; }
.edit-tools svg { width: 16px; height: 16px; }
.edit-tools button { width: 28px; }
.edit-tools .help { width: 24px; }
.edit-tools .group { padding: 0 4px 0 5px; }
.edit-tools .first { gap: 1px; padding: 0 5px 0 0; }

.scroller { flex: 1; min-height: 0; margin-top: 1px; display: grid; grid-template: 1fr 19px / 1fr 17px; border-top: 1px solid #999; border-left: 1px solid #999; }
.canvas { position: relative; background: #fff; display: flex; justify-content: space-between; padding: 7px 8px 7px 7px; }
.pins { display: flex; gap: 8px; height: 12px; }
.gear { position: absolute; left: 186px; top: 98px; }
.node { position: absolute; left: 200px; top: 112px; width: 64px; height: 65px; background: #ebeff2; border: 1px solid #000; }
.node-head { height: 28px; padding: 0 3px; line-height: 28px; color: #fff; background: #618091; border-bottom: 1px solid #000; }
.node-pin { display: block; padding: 6px 3px; }
.wire { position: absolute; left: 191px; top: 150px; width: 9px; height: 5px; background: linear-gradient(#aaa 0 0) 0 0 / 4px 5px no-repeat, linear-gradient(#aaa 0 0) 0 2px / 9px 1px no-repeat; }
.pinedit { position: absolute; left: 86px; top: 144px; width: 105px; height: 31px; display: flex; align-items: center; padding: 3px 0 0 3px; background: #fff; border: 2px solid #f00; }
.pinedit input { width: 78px; height: 18px; padding: 0; border: 0; outline: 0; font: inherit; color: inherit; }
.caret { width: 2px; height: 13px; background: #000; }

.vbar { display: flex; flex-direction: column; align-items: center; padding: 7px 0; gap: 7px; }
.hbar { display: flex; align-items: center; padding: 0 7px 0 6px; gap: 7px; }
.track { flex: 1; align-self: stretch; display: flex; }
.vbar .track { margin-left: 2px; }
.hbar .track { padding: 2px 6px 2px 0; }
.thumb { flex: none; background: #cdcdcd; }
.vbar .thumb { width: 100%; height: 88%; }
.hbar .thumb { height: 100%; width: 89%; }

.actions { display: flex; justify-content: center; gap: 5px; padding: 2px 2px 5px 0; }
.actions button { width: 125px; height: 22px; border: 1px solid #000; }

.status { display: flex; height: 26px; flex: none; padding: 1px 17px 2px 0; }
.field { display: flex; align-items: center; border-top: 1px solid #999; border-left: 1px solid #999; border-right: 1px solid #fff; border-bottom: 1px solid #fff; }
.message { flex: 837 1 0; margin-right: 9px; }
.current { flex: 809 1 0; padding: 1px 0 0 4px; }
.lamp { width: 26px; justify-content: center; }
.spare { width: 25px; }
```
